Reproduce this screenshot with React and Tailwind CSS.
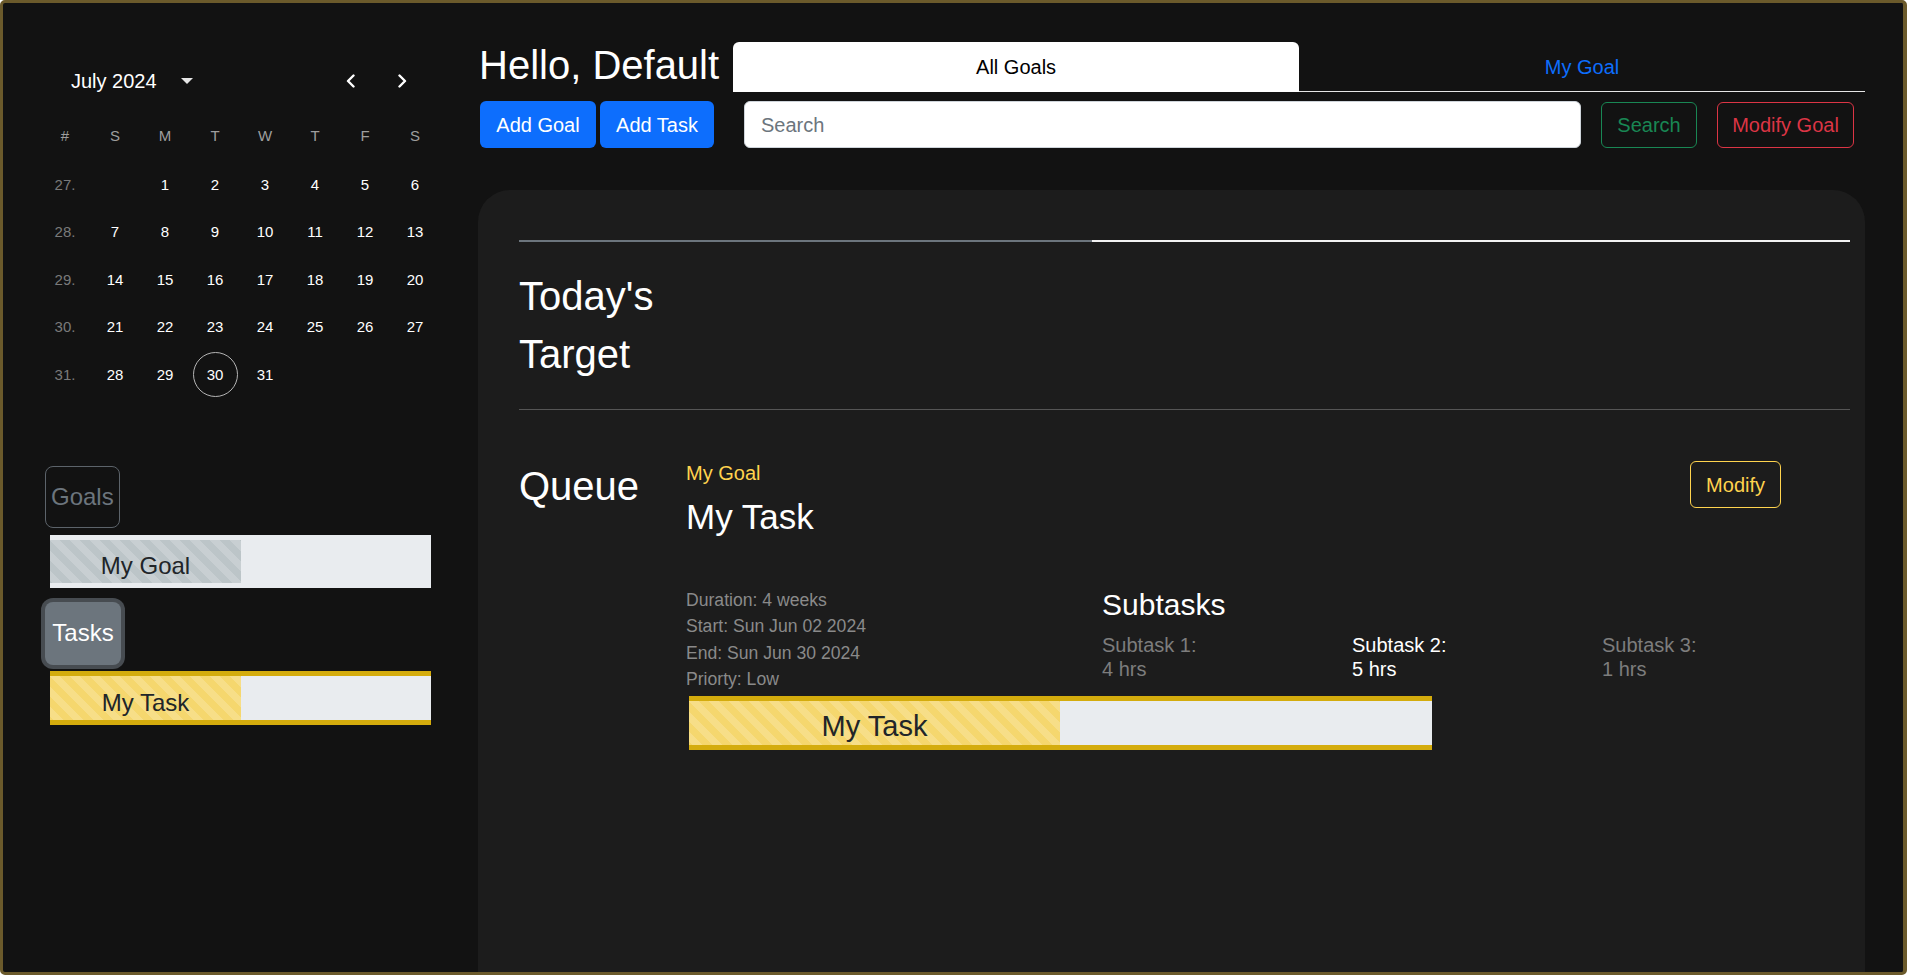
import React from 'react';

const stripes = "bg-[linear-gradient(45deg,rgba(255,255,255,.18)_25%,transparent_25%,transparent_50%,rgba(255,255,255,.18)_50%,rgba(255,255,255,.18)_75%,transparent_75%,transparent)] bg-[length:20px_20px]";

const weeks = [
  ['27.', '', '1', '2', '3', '4', '5', '6'],
  ['28.', '7', '8', '9', '10', '11', '12', '13'],
  ['29.', '14', '15', '16', '17', '18', '19', '20'],
  ['30.', '21', '22', '23', '24', '25', '26', '27'],
  ['31.', '28', '29', '30', '31', '', '', ''],
];

const Chevron = ({ flip }) => (
  <svg width="12" height="14" viewBox="0 0 12 14" className={flip ? 'rotate-180' : ''}>
    <path d="M8.5 1.5 L3 7 L8.5 12.5" fill="none" stroke="white" strokeWidth="2.4" strokeLinecap="round" strokeLinejoin="round" />
  </svg>
);

const Calendar = () => (
  <div className="pl-[37px] w-[437px]">
    {/* month header */}
    <div className="flex items-center h-[24px]">
      <span className="ml-[31px] text-[20px] leading-[24px] text-white">July 2024</span>
      <svg width="12" height="6" viewBox="0 0 12 6" className="ml-[24px]"><path d="M0 0 L12 0 L6 6 Z" fill="#e6e6e6" /></svg>
      <div className="ml-[152px]"><Chevron /></div>
      <div className="ml-[39px]"><Chevron flip /></div>
    </div>
    <div className="mt-[18px] grid grid-cols-8 w-[400px] h-[50px] items-center text-[15px] text-[#9e9e9e]">
      {['#', 'S', 'M', 'T', 'W', 'T', 'F', 'S'].map((d, i) => (
        <span key={i} className="text-center">{d}</span>
      ))}
    </div>
    {weeks.map((w, r) => (
      <div key={r} className="grid grid-cols-8 w-[400px] h-[47.5px] items-center text-[15px]">
        {w.map((d, i) => (
          <div key={i} className="flex justify-center">
            {i === 0 ? (
              <span className="text-[#7a7a7a]">{d}</span>
            ) : d === '30' ? (
              <span className="w-[45px] h-[45px] rounded-full border border-[#b5b5b5] flex items-center justify-center text-white">{d}</span>
            ) : (
              <span className="text-white">{d}</span>
            )}
          </div>
        ))}
      </div>
    ))}
  </div>
);

const Sidebar = () => (
  <div className="w-[475px] shrink-0 pt-[66px]">
    <Calendar />
    <div className="pl-[42px] mt-[67px]">
      <button className="h-[62px] px-[5px] border border-[#5c636a] rounded-[8px] text-[24px] leading-[36px] text-[#6c757d]">Goals</button>
      <div className="ml-[5px] mt-[7px] w-[381px] h-[53px] border-y-[5px] border-[#e9ecef] bg-[#e9ecef] flex">
        <div className={`w-[191px] h-full bg-[#bcc5c8] ${stripes} flex items-center justify-center pt-[9px] text-[24px] text-[#212529]`}>My Goal</div>
      </div>
      <button className="mt-[14px] w-[76px] h-[63px] rounded-[8px] bg-[#6c757d] ring-4 ring-[#474c51] text-[24px] text-white">Tasks</button>
      <div className="ml-[5px] mt-[6px] w-[381px] h-[54px] border-y-[5px] border-[#d4ac0d] bg-[#e9ecef] flex">
        <div className={`w-[191px] h-full bg-[#f5d76e] ${stripes} flex items-center justify-center pt-[10px] text-[24px] text-[#212529]`}>My Task</div>
      </div>
    </div>
  </div>
);

const Header = () => (
  <>
    <div className="flex items-start mt-[38px]">
      <h1 className="pl-px text-[40px] leading-[48px] text-white whitespace-nowrap">Hello, Default</h1>
      <div className="ml-[14px] mt-px flex flex-1 h-[50px] text-[20px]">
        <div className="flex-1 bg-white rounded-t-[6px] flex items-center justify-center text-black">All Goals</div>
        <div className="flex-1 border-b border-[#e6e6e6] flex items-center justify-center text-[#0d6efd]">My Goal</div>
      </div>
    </div>
    <div className="flex items-start mt-[9px] pl-[2px] text-[20px]">
      <button className="w-[116px] h-[47px] rounded-[6px] bg-[#0d6efd] text-white">Add Goal</button>
      <button className="ml-[4px] w-[114px] h-[47px] rounded-[6px] bg-[#0d6efd] text-white">Add Task</button>
      <input placeholder="Search" className="ml-[30px] w-[837px] h-[47px] rounded-[6px] bg-white border border-[#ced4da] px-4 pt-[2px] text-[20px] text-black placeholder:text-[#6c757d] outline-none" />
      <button className="ml-[20px] mt-px w-[96px] h-[46px] rounded-[6px] border border-[#198754] text-[#198754]">Search</button>
      <button className="ml-[20px] mt-px w-[137px] h-[46px] rounded-[6px] border border-[#dc3545] text-[#dc3545]">Modify Goal</button>
    </div>
  </>
);

const subtasks = [
  { name: 'Subtask 1:', hrs: '4 hrs', active: false },
  { name: 'Subtask 2:', hrs: '5 hrs', active: true },
  { name: 'Subtask 3:', hrs: '1 hrs', active: false },
];

const Panel = () => (
  <div className="mt-[42px] flex-1 bg-[#1c1c1c] rounded-t-[32px] pl-[41px] pr-[15px] pt-[50px]">
    <div className="flex h-[2px]">
      <div className="w-[573px] bg-[#6c757d]" />
      <div className="flex-1 bg-[#f2f2f2]" />
    </div>
    <h2 className="mt-[25px] w-[170px] text-[40px] leading-[58px] text-white">Today's Target</h2>
    <div className="mt-[26px] h-px bg-[#555555]" />

    <div className="mt-[47px] flex items-start">
      <h2 className="w-[167px] shrink-0 text-[40px] leading-[58px] text-white">Queue</h2>
      <div className="flex-1 pt-px">
        <div className="flex items-start">
          <div>
            <div className="text-[20px] leading-[30px] text-[#ffd34e]">My Goal</div>
            <div className="mt-[8px] text-[35px] leading-[41px] text-white">My Task</div>
          </div>
          <button className="ml-auto mr-[71px] mt-[3px] h-[47px] px-[15px] rounded-[6px] border border-[#ffd34e] text-[20px] text-[#ffd34e]">Modify</button>
        </div>

        <div className="mt-[50px] flex items-start">
          <div className="w-[416px] shrink-0 text-[17.6px] leading-[26.4px] text-[#8a8a8a]">
            <div>Duration: 4 weeks</div>
            <div>Start: Sun Jun 02 2024</div>
            <div>End: Sun Jun 30 2024</div>
            <div>Priorty: Low</div>
          </div>
          <div>
            <div className="text-[30px] leading-[35px] text-white">Subtasks</div>
            <div className="mt-[11px] flex">
              {subtasks.map((s) => (
                <div key={s.name} className={`w-[250px] text-[20px] leading-[24px] ${s.active ? 'text-white' : 'text-[#7d7d7d]'}`}>
                  <div>{s.name}</div>
                  <div>{s.hrs}</div>
                </div>
              ))}
            </div>
          </div>
        </div>

        <div className="mt-[3px] ml-[3px] w-[743px] h-[54px] border-y-[5px] border-[#d4ac0d] bg-[#e9ecef] flex">
          <div className={`w-[371px] h-full bg-[#f5d76e] ${stripes} flex items-center justify-center pt-[8px] text-[29px] text-[#212529]`}>My Task</div>
        </div>
      </div>
    </div>
  </div>
);

export default function App() {
  return (
    <div className="w-[1907px] h-[975px] bg-[#121212] border-[3px] border-r-4 border-[#6b5a2b] rounded-[5px] overflow-hidden flex font-['Liberation_Sans',Arial,sans-serif]">
      <Sidebar />
      <div className="w-[1387px] shrink-0 flex flex-col">
        <Header />
        <Panel />
      </div>
      <div className="flex-1" />
    </div>
  );
}
